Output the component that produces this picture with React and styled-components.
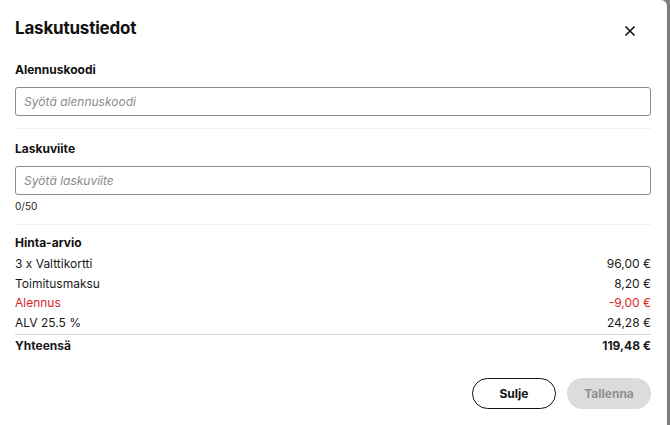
import React from "react";
import styled, { createGlobalStyle } from "styled-components";

const GlobalStyle = createGlobalStyle`
    html, body {
        margin: 0;
        padding: 0;
        background: #8a8a8a;
        font-family: Inter, "Liberation Sans", sans-serif;
        color: #111;
    }
`;

const Backdrop = styled.div`
    width: 670px;
    height: 425px;
    display: flex;
    background: #7d7d7d;
    overflow: hidden;
`;

const Modal = styled.div`
    width: 667px;
    height: 425px;
    background: white;
    border-top-right-radius: 6px;
    box-sizing: border-box;
    padding: 16px 16px 0 15px;
    display: flex;
    flex-direction: column;
`;

const Header = styled.div`
    display: flex;
    justify-content: space-between;
    align-items: center;
    height: 24px;
    margin-bottom: 22px;
`;

const Title = styled.h2`
    margin: 0;
    font-size: 17px;
    font-weight: 700;
    letter-spacing: -0.2px;
`;

const CloseButton = styled.button`
    border: none;
    background: none;
    padding: 0;
    margin-right: 15px;
    margin-top: 6px;
    display: flex;
    cursor: pointer;
`;

const Section = styled.div`
    display: flex;
    flex-direction: column;
    width: 636px;
`;

const Label = styled.label`
    font-size: 12px;
    font-weight: 700;
    margin-bottom: ${p => p.$gap || "9px"};
    line-height: 16px;
`;

const Input = styled.input`
    box-sizing: border-box;
    width: 100%;
    height: 29px;
    border: 1px solid #8c8c8c;
    border-radius: 3px;
    padding: 0 8px;
    font-family: inherit;
    font-size: 12px;
    outline: none;

    &::placeholder {
        color: #8a8a8a;
        font-style: italic;
    }
`;

const Counter = styled.div`
    font-size: 10px;
    color: #222;
    margin-top: 5px;
`;

const Divider = styled.hr`
    border: none;
    border-top: 1px solid ${p => (p.$strong ? "#d6d6d6" : "#f0f0f0")};
    margin: ${p => p.$margin || "12px 0 0"};
    width: 636px;
`;

const PriceRow = styled.div`
    display: flex;
    justify-content: space-between;
    width: 636px;
    font-size: 12px;
    line-height: 19.7px;
    color: ${p => (p.$red ? "#d62828" : "#1a1a1a")};
    font-weight: ${p => (p.$bold ? 700 : 400)};
`;

const Footer = styled.div`
    display: flex;
    justify-content: flex-end;
    gap: 11px;
    width: 636px;
    margin-top: 22px;
`;

const Button = styled.button`
    width: 84px;
    height: 31px;
    border-radius: 16px;
    font-family: inherit;
    font-size: 12px;
    font-weight: 700;
    border: ${p => (p.$disabled ? "none" : "1px solid #111")};
    background: ${p => (p.$disabled ? "#dcdcdc" : "white")};
    color: ${p => (p.$disabled ? "#8f8f8f" : "#111")};
`;

const CloseIcon = () => (
    <svg width="12" height="12" viewBox="0 0 12 12">
        <path d="M1.5 1.5L10.5 10.5M10.5 1.5L1.5 10.5" stroke="#111" strokeWidth="1.6" />
    </svg>
);

const prices = [
    { label: "3 x Valttikortti", value: "96,00 €" },
    { label: "Toimitusmaksu", value: "8,20 €" },
    { label: "Alennus", value: "-9,00 €", red: true },
    { label: "ALV 25.5 %", value: "24,28 €" },
];

export default function App() {
    return (
        <>
            <GlobalStyle />
            <Backdrop>
                <Modal>
                    <Header>
                        <Title>Laskutustiedot</Title>
                        <CloseButton aria-label="Sulje">
                            <CloseIcon />
                        </CloseButton>
                    </Header>
                    <Section>
                        <Label>Alennuskoodi</Label>
                        <Input placeholder="Syötä alennuskoodi" />
                    </Section>
                    <Divider $margin="12px 0 12px" />
                    <Section>
                        <Label>Laskuviite</Label>
                        <Input placeholder="Syötä laskuviite" />
                        <Counter>0/50</Counter>
                    </Section>
                    <Divider $margin="12px 0 10px" />
                    <Section>
                        <Label $gap="3px">Hinta-arvio</Label>
                        {prices.map(p => (
                            <PriceRow key={p.label} $red={p.red}>
                                <span>{p.label}</span>
                                <span>{p.value}</span>
                            </PriceRow>
                        ))}
                    </Section>
                    <Divider $strong $margin="1px 0 1px" />
                    <PriceRow $bold>
                        <span>Yhteensä</span>
                        <span>119,48 €</span>
                    </PriceRow>
                    <Footer>
                        <Button>Sulje</Button>
                        <Button $disabled disabled>Tallenna</Button>
                    </Footer>
                </Modal>
            </Backdrop>
        </>
    );
}
